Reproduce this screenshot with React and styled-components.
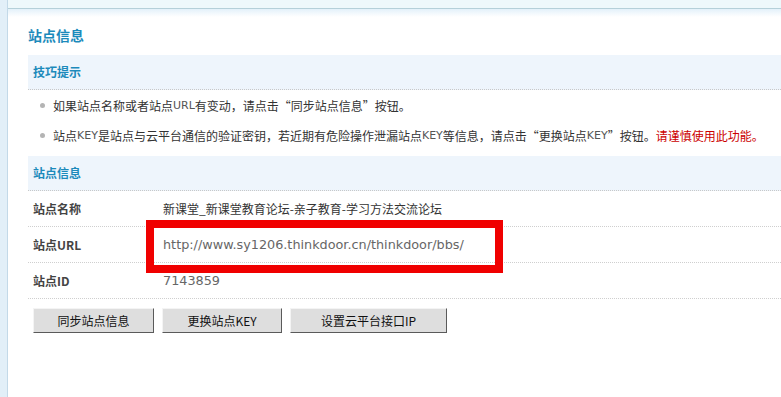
import React from "react";
import styled, { createGlobalStyle } from "styled-components";

const Global = createGlobalStyle`
  html, body { margin: 0; padding: 0; background: #fff; }
  body {
    font-family: "Noto Sans CJK SC", "DejaVu Sans", sans-serif;
    font-size: 12px;
    color: #333;
  }
`;

const Page = styled.div`
  display: flex;
  width: 781px;
  height: 397px;
  overflow: hidden;
`;

const Rail = styled.div`
  width: 7px;
  flex: none;
  background: #e2eff8;
  border-right: 1px solid #c3d9e8;
`;

const Main = styled.div`
  flex: 1;
  min-width: 0;
  display: flex;
  flex-direction: column;
`;

const TopBar = styled.div`
  height: 8px;
  background: #eef8fb;
  border-bottom: 1px solid #b5d0d9;
`;

const Content = styled.div`
  background: linear-gradient(#e3f1fa 0px, #ffffff 8px);
  padding: 16px 0 0 20px;
`;

const Title = styled.h1`
  margin: 0;
  height: 20px;
  line-height: 20px;
  font-size: 14px;
  font-weight: bold;
  color: #1c8abb;
`;

const SectionHead = styled.div`
  margin-top: ${(p) => p.$mt}px;
  height: 34px;
  line-height: 34px;
  padding-left: 5px;
  background: #eef5fc;
  border-bottom: 1px dotted #c8c8c8;
  font-weight: bold;
  font-size: 12px;
  color: #1c8abb;
`;

const TipList = styled.ul`
  list-style: none;
  margin: 0;
  padding: 0 0 0 12px;
`;

const Tip = styled.li`
  display: flex;
  align-items: center;
  height: 30px;
  white-space: nowrap;
  color: #333;
`;

const Dot = styled.span`
  width: 5px;
  height: 5px;
  border-radius: 50%;
  background: #b4b4b4;
  margin-right: 8px;
  flex: none;
`;

const Latin = styled.span`
  font-family: "DejaVu Sans", sans-serif;
  font-size: 11px;
  color: #555;
`;

const Warn = styled.span`
  color: #cc0000;
`;

const InfoRow = styled.div`
  position: relative;
  display: flex;
  align-items: center;
  height: 35px;
  border-bottom: 1px dotted #cfcfcf;
`;

const Label = styled.div`
  width: 130px;
  padding-left: 5px;
  flex: none;
  font-weight: bold;
  color: #444;
`;

const Value = styled.div`
  font-family: "DejaVu Sans", sans-serif;
  font-size: 12.8px;
  color: #666;
  white-space: nowrap;
`;

const CjkValue = styled.div`
  font-family: "Noto Sans CJK SC", sans-serif;
  font-size: 12px;
  color: #333;
  white-space: nowrap;
`;

const Highlight = styled.div`
  position: absolute;
  left: 118px;
  top: -7px;
  width: 357px;
  height: 53px;
  box-sizing: border-box;
  border: 8px solid #f00000;
  pointer-events: none;
`;

const Buttons = styled.div`
  display: flex;
  gap: 8px;
  padding: 9px 0 0 5px;
`;

const Button = styled.button`
  width: ${(p) => p.$w}px;
  height: 25px;
  padding: 0;
  background: #dedede;
  border: 1px solid;
  border-color: #f4f4f4 #5a5a5a #5a5a5a #f4f4f4;
  font-family: "Noto Sans CJK SC", sans-serif;
  font-size: 12px;
  color: #111;
`;

export default function App() {
  return (
    <>
      <Global />
      <Page>
        <Rail />
        <Main>
          <TopBar />
          <Content>
            <Title>站点信息</Title>
            <SectionHead $mt={10}>技巧提示</SectionHead>
            <TipList>
              <Tip>
                <Dot />
                如果站点名称或者站点<Latin>URL</Latin>有变动，请点击“同步站点信息”按钮。
              </Tip>
              <Tip>
                <Dot />
                站点<Latin>KEY</Latin>是站点与云平台通信的验证密钥，若近期有危险操作泄漏站点<Latin>KEY</Latin>等信息，请点击“更换站点<Latin>KEY</Latin>”按钮。
                <Warn>请谨慎使用此功能。</Warn>
              </Tip>
            </TipList>
            <SectionHead $mt={6}>站点信息</SectionHead>
            <InfoRow>
              <Label>站点名称</Label>
              <CjkValue>新课堂_新课堂教育论坛-亲子教育-学习方法交流论坛</CjkValue>
            </InfoRow>
            <InfoRow>
              <Label>站点URL</Label>
              <Value>http://www.sy1206.thinkdoor.cn/thinkdoor/bbs/</Value>
              <Highlight />
            </InfoRow>
            <InfoRow>
              <Label>站点ID</Label>
              <Value>7143859</Value>
            </InfoRow>
            <Buttons>
              <Button $w={121}>同步站点信息</Button>
              <Button $w={120}>更换站点KEY</Button>
              <Button $w={157}>设置云平台接口IP</Button>
            </Buttons>
          </Content>
        </Main>
      </Page>
    </>
  );
}
